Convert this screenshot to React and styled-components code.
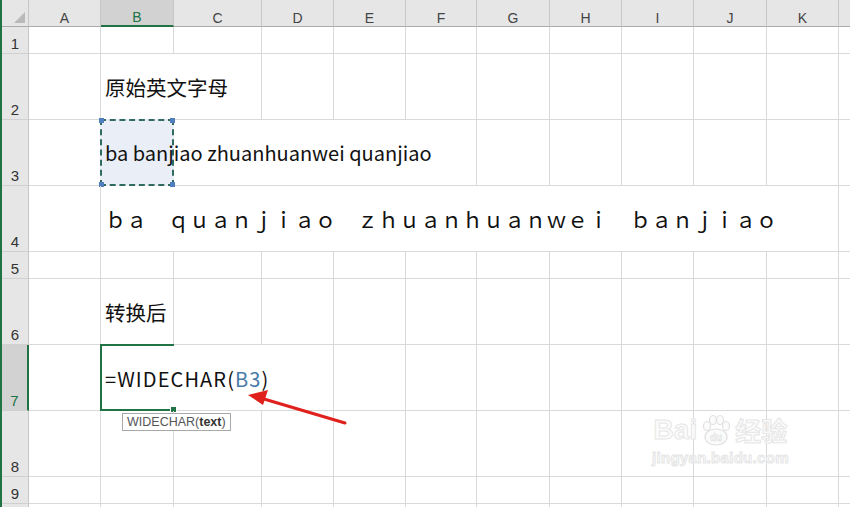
import React from 'react'
import styled, { createGlobalStyle, css } from 'styled-components'

const GlobalStyle = createGlobalStyle`
  html, body {
    margin: 0;
    padding: 0;
    background: #ffffff;
    overflow: hidden;
  }
  body {
    font-family: "Noto Sans CJK SC", "Noto Sans", sans-serif;
  }
`

const GREEN = '#217346'
const GRID = '#d9d9d9'

const columns = [
  { key: 'A', width: 72 },
  { key: 'B', width: 73, selected: true },
  { key: 'C', width: 88 },
  { key: 'D', width: 72 },
  { key: 'E', width: 72 },
  { key: 'F', width: 71 },
  { key: 'G', width: 73 },
  { key: 'H', width: 72 },
  { key: 'I', width: 72 },
  { key: 'J', width: 73 },
  { key: 'K', width: 72 },
  { key: '', width: 40 }
]

const rows = [
  { n: 1, h: 27, cells: [] },
  { n: 2, h: 66, cells: [{ col: 1, span: 2, text: '原始英文字母', kind: 'cjk' }] },
  { n: 3, h: 66, cells: [{ col: 1, span: 5, text: 'ba banjiao zhuanhuanwei quanjiao', copied: true }] },
  { n: 4, h: 66, cells: [{ col: 1, span: 10, text: 'ｂａ　ｑｕａｎｊｉａｏ　ｚｈｕａｎｈｕａｎｗｅｉ　ｂａｎｊｉａｏ', kind: 'wide' }] },
  { n: 5, h: 27, cells: [] },
  { n: 6, h: 66, cells: [{ col: 1, span: 1, text: '转换后', kind: 'cjk' }] },
  { n: 7, h: 66, selected: true, cells: [{ col: 1, span: 3, formula: true, kind: 'formula' }] },
  { n: 8, h: 66, cells: [] },
  { n: 9, h: 27, cells: [] },
  { n: '', h: 27, cells: [] }
]

const Frame = styled.div`
  position: relative;
  width: 850px;
  height: 507px;
  overflow: hidden;
  border-left: 2px solid ${GREEN};
  box-sizing: border-box;
  background: #fff;
`

const Sheet = styled.div`
  display: grid;
  grid-template-columns: 27px ${columns.map(c => c.width + 'px').join(' ')};
  grid-template-rows: 27px ${rows.map(r => r.h + 'px').join(' ')};
`

const Corner = styled.div`
  position: relative;
  background: #e6e6e6;
  border-right: 1px solid #c6c6c6;
  border-bottom: 1px solid #ababab;
  box-sizing: border-box;

  &::after {
    content: '';
    position: absolute;
    right: 3px;
    bottom: 3px;
    width: 0;
    height: 0;
    border-left: 11px solid transparent;
    border-bottom: 11px solid #b9b9b9;
  }
`

const ColHeader = styled.div`
  display: flex;
  align-items: center;
  justify-content: center;
  padding-top: 9px;
  box-sizing: border-box;
  background: ${p => (p.$selected ? '#d2d2d2' : '#e6e6e6')};
  border-right: 1px solid #c6c6c6;
  border-bottom: ${p => (p.$selected ? `2px solid ${GREEN}` : '1px solid #ababab')};
  color: ${p => (p.$selected ? GREEN : '#444')};
  font-family: "Liberation Sans", Arial, sans-serif;
  font-size: 14px;
`

const RowHeader = styled.div`
  display: flex;
  align-items: flex-end;
  justify-content: center;
  padding-bottom: 1px;
  box-sizing: border-box;
  background: ${p => (p.$selected ? '#d2d2d2' : '#e6e6e6')};
  border-right: ${p => (p.$selected ? `2px solid ${GREEN}` : '1px solid #c6c6c6')};
  border-bottom: 1px solid #d0d0d0;
  color: ${p => (p.$selected ? GREEN : '#333')};
  font-family: "Liberation Sans", Arial, sans-serif;
  font-size: 15px;
`

const Cell = styled.div`
  position: relative;
  display: flex;
  align-items: center;
  padding-left: 4px;
  box-sizing: border-box;
  border-right: 1px solid ${GRID};
  border-bottom: 1px solid ${GRID};
  grid-column: span ${p => p.$span || 1};
  white-space: nowrap;
  font-size: 20px;
  color: #111;
  ${p => p.$kind === 'cjk' && css`
    font-size: 20.5px;
  `}
  ${p => p.$kind === 'wide' && css`
    font-size: 21px;
    padding-left: 4px;
  `}
  ${p => p.$kind === 'formula' && css`
    letter-spacing: 1.1px;
    padding-top: 2px;
  `}
`

const CopyMarquee = styled.div`
  position: absolute;
  left: -1px;
  top: -1px;
  width: 74px;
  height: 67px;
  box-sizing: border-box;
  background: #e9eef7;
  border: 2px dashed #2f6b5e;
  z-index: 0;
`

const Handle = styled.span`
  position: absolute;
  width: 5px;
  height: 5px;
  background: #4f7fbf;
  ${p => (p.$top ? 'top: -3px;' : 'bottom: -3px;')}
  ${p => (p.$left ? 'left: -3px;' : 'right: -3px;')}
`

const CellText = styled.span`
  position: relative;
  z-index: 1;
`

const EditBox = styled.div`
  position: absolute;
  left: -1px;
  top: -1px;
  width: 74px;
  height: 67px;
  box-sizing: border-box;
  border-top: 2px solid ${GREEN};
  border-left: 2px solid ${GREEN};
  border-bottom: 2px solid ${GREEN};

  &::after {
    content: '';
    position: absolute;
    right: -3px;
    bottom: -4px;
    width: 5px;
    height: 5px;
    background: ${GREEN};
    border: 1px solid #fff;
  }
`

const Ref = styled.span`
  color: #4a7aa8;
`

const Tooltip = styled.div`
  position: absolute;
  left: 120px;
  top: 413px;
  height: 18px;
  padding: 0 4px;
  display: flex;
  align-items: center;
  box-sizing: border-box;
  background: #fff;
  border: 1px solid #a8a8a8;
  color: #555;
  font-family: "Liberation Sans", Arial, sans-serif;
  font-size: 12.5px;

  b {
    color: #333;
  }
`

const Arrow = styled.svg`
  position: absolute;
  left: 0;
  top: 0;
  pointer-events: none;
`

const Watermark = styled.div`
  position: absolute;
  left: 650px;
  top: 413px;
  display: flex;
  flex-direction: column;
  align-items: center;
  color: #fbfbfb;
  -webkit-text-stroke: 1px #e6e6e6;
  font-family: "Liberation Sans", Arial, sans-serif;
  line-height: 1;
`

const MarkTitle = styled.div`
  display: flex;
  align-items: center;
  gap: 2px;
  font-size: 28px;
  font-weight: bold;
`

const MarkCjk = styled.span`
  font-family: "Noto Sans CJK SC", sans-serif;
  font-size: 26px;
`

const MarkUrl = styled.div`
  margin-top: 3px;
  font-size: 15px;
  font-weight: bold;
  letter-spacing: 0.3px;
`

function FormulaContent () {
  return (
    <>
      <EditBox />
      <CellText>=WIDECHAR(<Ref>B3</Ref>)</CellText>
    </>
  )
}

function renderRow (row, ri) {
  const out = [
    <RowHeader key={'h' + ri} $selected={row.selected}>{row.n}</RowHeader>
  ]
  let col = 0
  const sorted = row.cells.slice().sort((a, b) => a.col - b.col)
  sorted.forEach((c, i) => {
    while (col < c.col) {
      out.push(<Cell key={ri + '-' + col} />)
      col++
    }
    out.push(
      <Cell key={ri + '-c' + i} $span={c.span} $kind={c.kind}>
        {c.copied && (
          <CopyMarquee>
            <Handle $top $left />
            <Handle $top />
            <Handle $left />
            <Handle />
          </CopyMarquee>
        )}
        {c.formula ? <FormulaContent /> : <CellText>{c.text}</CellText>}
      </Cell>
    )
    col += c.span
  })
  while (col < columns.length) {
    out.push(<Cell key={ri + '-' + col} />)
    col++
  }
  return out
}

export default function App () {
  return (
    <Frame>
      <GlobalStyle />
      <Sheet>
        <Corner />
        {columns.map((c, i) => (
          <ColHeader key={'c' + i} $selected={c.selected}>{c.key}</ColHeader>
        ))}
        {rows.map(renderRow)}
      </Sheet>

      <Tooltip>WIDECHAR(<b>text</b>)</Tooltip>

      <Arrow width='850' height='507' viewBox='0 0 850 507'>
        <path d='M343 423 L262 399' stroke='#e0201c' strokeWidth='3' strokeLinecap='round' />
        <path d='M246 395 L266 390 L261 405 Z' fill='#e0201c' />
      </Arrow>

      <Watermark>
        <MarkTitle>
          <span>Bai</span>
          <svg width='34' height='34' viewBox='0 0 34 34'>
            <g fill='#fbfbfb' stroke='#e0e0e0' strokeWidth='1.2'>
              <ellipse cx='8' cy='13' rx='3.5' ry='4.5' />
              <ellipse cx='14' cy='7' rx='3.5' ry='4.5' />
              <ellipse cx='21' cy='7' rx='3.5' ry='4.5' />
              <ellipse cx='27' cy='13' rx='3.5' ry='4.5' />
              <ellipse cx='17' cy='24' rx='11' ry='8' />
            </g>
            <text x='17' y='28' textAnchor='middle' fontSize='10' fill='#fbfbfb' stroke='#e0e0e0' strokeWidth='0.6' fontFamily='Liberation Sans, sans-serif'>du</text>
          </svg>
          <MarkCjk>经验</MarkCjk>
        </MarkTitle>
        <MarkUrl>jingyan.baidu.com</MarkUrl>
      </Watermark>
    </Frame>
  )
}
